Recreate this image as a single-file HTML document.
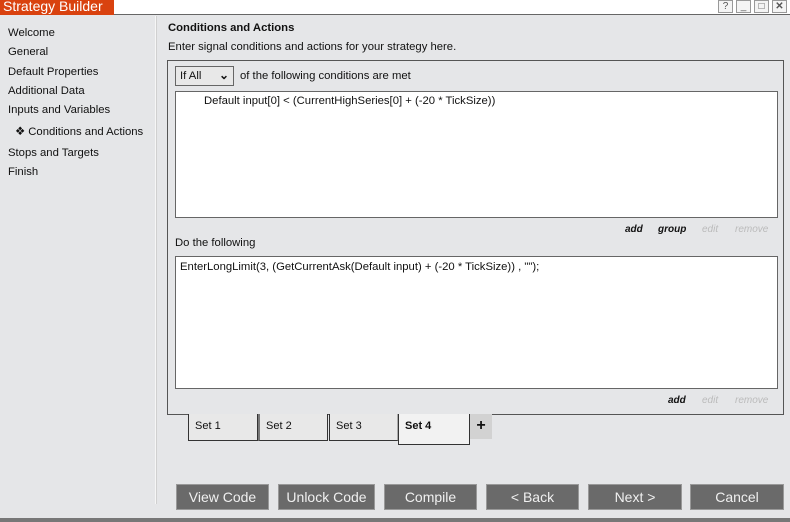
<!DOCTYPE html>
<html><head><meta charset="utf-8"><style>
*{margin:0;padding:0;box-sizing:border-box}
body{width:790px;height:522px;overflow:hidden;background:#e5e6e8;font-family:"Liberation Sans",sans-serif;font-size:11.3px;color:#111;position:relative}
.a{position:absolute}
.tb{left:0;top:0;width:790px;height:15px;background:#fff;border-bottom:1px solid #666}
.title{left:0;top:0;width:114px;height:15px;background:#d9420f;color:#fff;font-size:14px;line-height:13px;padding-left:3px;overflow:hidden}
.ctl{top:0;width:15px;height:13px;border:1px solid #999;background:#f4f4f4;font-size:10px;line-height:11px;text-align:center;color:#555}
.nav{left:8px;font-size:11.3px}
.sep{left:155px;top:16px;width:2px;height:488px;background:#f6f6f6;border-right:1px solid #d0d0d0}
.box{background:#fff;border:1px solid #666}
.lnk{font-style:italic;font-size:10px;font-weight:bold}
.btn{top:484px;height:26px;background:#6a6a6a;border:1px solid #999;color:#f0f0f0;font-size:14px;text-align:center;line-height:24px}
.tab{top:414px;height:27px;border:1px solid #333;border-top:none;background:#e8e8e8;padding:6px 0 0 6px;font-size:11px}
</style></head><body>
<div class="a tb"></div>
<div class="a title">Strategy Builder</div>
<div class="a ctl" style="left:718px">?</div>
<div class="a ctl" style="left:736px">_</div>
<div class="a ctl" style="left:754px">□</div>
<div class="a ctl" style="left:772px;font-weight:bold">✕</div>
<div class="a nav" style="top:27px">Welcome</div>
<div class="a nav" style="top:46px">General</div>
<div class="a nav" style="top:66px">Default Properties</div>
<div class="a nav" style="top:85px">Additional Data</div>
<div class="a nav" style="top:104px">Inputs and Variables</div>
<div class="a nav" style="top:125px;left:15px">❖ Conditions and Actions</div>
<div class="a nav" style="top:147px">Stops and Targets</div>
<div class="a nav" style="top:166px">Finish</div>
<div class="a sep"></div>
<div class="a" style="left:168px;top:22px;font-weight:bold">Conditions and Actions</div>
<div class="a" style="left:168px;top:41px">Enter signal conditions and actions for your strategy here.</div>
<div class="a" style="left:167px;top:60px;width:617px;height:355px;border:1px solid #555"></div>
<div class="a" style="left:175px;top:66px;width:59px;height:20px;border:1px solid #666;background:#e8e8e8;padding:3px 0 0 4px">If All<span style="position:absolute;right:4px;top:1px;font-size:12px;font-weight:bold">⌄</span></div>
<div class="a" style="left:240px;top:70px">of the following conditions are met</div>
<div class="a box" style="left:175px;top:91px;width:603px;height:127px;padding:3px 0 0 28px">Default input[0] &lt; (CurrentHighSeries[0] + (-20 * TickSize))</div>
<div class="a lnk" style="left:625px;top:224px">add</div>
<div class="a lnk" style="left:658px;top:224px">group</div>
<div class="a lnk" style="left:702px;top:224px;color:#bbb;font-weight:normal">edit</div>
<div class="a lnk" style="left:735px;top:224px;color:#bbb;font-weight:normal">remove</div>
<div class="a" style="left:175px;top:237px">Do the following</div>
<div class="a box" style="left:175px;top:256px;width:603px;height:133px;padding:4px 0 0 4px">EnterLongLimit(3, (GetCurrentAsk(Default input) + (-20 * TickSize)) , "");</div>
<div class="a lnk" style="left:668px;top:395px">add</div>
<div class="a lnk" style="left:702px;top:395px;color:#bbb;font-weight:normal">edit</div>
<div class="a lnk" style="left:735px;top:395px;color:#bbb;font-weight:normal">remove</div>
<div class="a tab" style="left:188px;width:70px">Set 1</div>
<div class="a tab" style="left:258px;width:70px;border-left:2px solid #777">Set 2</div>
<div class="a tab" style="left:329px;width:70px;border-right:2px solid #aaa">Set 3</div>
<div class="a tab" style="left:398px;width:72px;height:31px;background:#f2f2f2;font-weight:bold">Set 4</div>
<div class="a" style="left:470px;top:414px;width:22px;height:25px;background:#d2d2d2;font-size:16px;font-weight:bold;text-align:center;line-height:23px">+</div>
<div class="a btn" style="left:176px;width:93px">View Code</div>
<div class="a btn" style="left:278px;width:97px">Unlock Code</div>
<div class="a btn" style="left:384px;width:93px">Compile</div>
<div class="a btn" style="left:486px;width:93px">&lt; Back</div>
<div class="a btn" style="left:588px;width:94px">Next &gt;</div>
<div class="a btn" style="left:690px;width:94px">Cancel</div>
<div class="a" style="left:0;top:518px;width:790px;height:4px;background:#777"></div>
</body></html>
